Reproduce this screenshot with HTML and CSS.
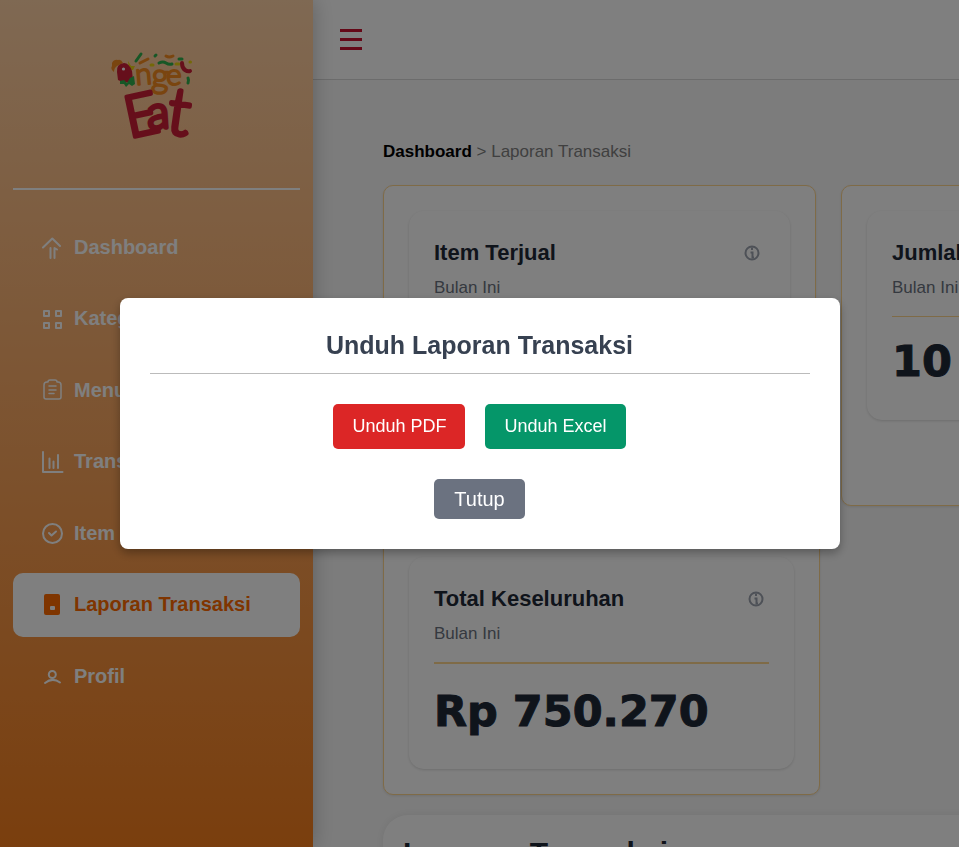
FILE: index.html
```html
<!DOCTYPE html>
<html lang="id">
<head>
<meta charset="utf-8">
<meta name="viewport" content="width=device-width, initial-scale=1">
<title>Laporan Transaksi</title>
<link rel="stylesheet" href="styles.css">
</head>
<body>
<div class="layout">
  <aside class="sidebar">
    <div class="brand">
      <svg class="logo" viewBox="0 0 110 110" role="img" aria-label="Nge Eat">
        <path class="orange" d="M12 23q2-4 6-3q3-1 5 3l-6 3q-3 2-3 6q-4-3-2-6z"/>
        <path class="yellow" d="M28 21l3 5 4 0-2 4-4 0z"/>
        <path class="red" d="M17 32q-1-8 7-9 5 0 8 8l1 9q-6 5-15 0z"/>
        <path class="green" d="M20 41l4-1 3 3 3-5 4-2 1 8-3 2-3-2-3 3-2-3-4 0z"/>
        <circle class="eye" cx="23.5" cy="29" r="1.6"/>
        <g class="confetti">
          <path class="s-green" d="M36 21L41 14M59 23q4-2 7 0t6 1M55 16l1-1M88 38q1 2 0 5M79 19l3 0"/>
          <path class="s-orange" d="M40 23l8-4M66 16q3 2 7 0"/>
          <path class="s-yellow" d="M51 25l2 0M90 22l.5 0M76 24l3 0"/>
          <path class="s-red bold" d="M82 23q0 5 3 7t5 1"/>
        </g>
        <g class="word-top">
          <text x="36" y="45" transform="rotate(-5 36 45)">n</text>
          <text class="g" x="51" y="47" transform="rotate(3 51 47)">g</text>
          <text x="66" y="45">e</text>
        </g>
        <g class="word-bottom">
          <text class="e" x="29" y="98" transform="rotate(-12 29 98)">E</text>
          <text class="a" x="48" y="89" transform="rotate(-4 48 89)">a</text>
          <text class="t" x="65" y="93" transform="rotate(8 65 93)">t</text>
        </g>
      </svg>
    </div>
    <nav class="nav" aria-label="Menu utama">
      <a class="nav-item" href="#"><svg class="icon thick" viewBox="0 0 24 24"><path d="M3 12.500l9.300-9L20 11M10.500 13V23M14.500 23V13L17 14.500"/></svg>Dashboard</a>
      <a class="nav-item" href="#"><svg class="icon thick" viewBox="0 0 24 24"><path d="M4 4h5v5h-5zM16 4h5v5h-5zM4 16h5v5h-5zM16 16h5v5h-5z"/></svg>Kategori</a>
      <a class="nav-item" href="#"><svg class="icon" viewBox="0 0 24 24"><path d="M8 4Q8 2 10 2h5q2 0 2 2h1q3 0 3 3v12q0 2-2 2H6q-2 0-2-2V7q0-3 3-3zM9 8h7M9 12h7M9 15.5h5"/></svg>Menu</a>
      <a class="nav-item" href="#"><svg class="icon thick" viewBox="0 0 24 24"><path d="M3 2V22H22.500M9.500 8.500V18M13.500 11.500V18M18 5V18"/></svg>Transaksi</a>
      <a class="nav-item" href="#"><svg class="icon thick" viewBox="0 0 24 24"><circle cx="12.500" cy="12.500" r="9.500"/><path d="M9 12l2.500 2.500L16 10.500"/></svg>Item Terjual</a>
      <a class="nav-item active" href="#" aria-current="page"><svg class="icon" viewBox="0 0 24 24"><rect class="solid" x="4" y="1" width="16" height="21" rx="2"/><rect class="hole" x="10" y="13" width="5" height="4" rx="1"/></svg>Laporan Transaksi</a>
      <a class="nav-item" href="#"><svg class="icon thick" viewBox="0 0 24 24"><circle cx="12.300" cy="10.500" r="3.500"/><path d="M5 19Q12.500 13 20 18.500"/></svg>Profil</a>
    </nav>
  </aside>

  <div class="page">
    <header class="topbar">
      <button class="menu-toggle" type="button" aria-label="Buka menu">
        <svg viewBox="0 0 22 22"><path d="M0 1.500h22M0 10.500h22M0 19.500h22"/></svg>
      </button>
    </header>
    <main class="content">
      <div class="breadcrumb"><a href="#">Dashboard</a> &gt; Laporan Transaksi</div>
      <div class="stats">
        <section class="frame">
          <div class="stat">
            <div class="stat-head"><h2>Item Terjual</h2><svg class="info" viewBox="0 0 16 16"><circle cx="8" cy="8" r="6.500"/><path d="M8 2.500V5M6.500 7.500H8.500V12.500H10"/></svg></div>
            <p>Bulan Ini</p>
          </div>
        </section>
        <section class="frame">
          <div class="stat">
            <div class="stat-head"><h2>Jumlah Transaksi</h2></div>
            <p>Bulan Ini</p>
            <strong>10</strong>
          </div>
        </section>
      </div>
      <div class="stats">
        <section class="frame wide">
          <div class="stat">
            <div class="stat-head"><h2>Total Keseluruhan</h2><svg class="info" viewBox="0 0 16 16"><circle cx="8" cy="8" r="6.500"/><path d="M8 2.500V5M6.500 7.500H8.500V12.500H10"/></svg></div>
            <p>Bulan Ini</p>
            <strong>Rp 750.270</strong>
          </div>
        </section>
      </div>
      <section class="report"><h2>Laporan Transaksi</h2></section>
    </main>
  </div>
</div>

<div class="overlay">
  <div class="modal" role="dialog" aria-modal="true" aria-labelledby="modal-title">
    <h2 id="modal-title">Unduh Laporan Transaksi</h2>
    <div class="actions">
      <button class="btn pdf" type="button">Unduh PDF</button>
      <button class="btn excel" type="button">Unduh Excel</button>
    </div>
    <button class="btn close" type="button">Tutup</button>
  </div>
</div>
</body>
</html>
```

FILE: styles.css
```css
* { box-sizing: border-box; }

body {
  margin: 0;
  height: 100vh;
  overflow: hidden;
  background: #f9f9f9;
  color: #1f2937;
  font-family: "Liberation Sans", Arial, sans-serif;
}

h2, p { margin: 0; }
button { font-family: inherit; border: 0; cursor: pointer; }

.layout { display: flex; height: 100vh; overflow: hidden; }

/* Sidebar */
.sidebar {
  flex: 0 0 313px;
  z-index: 1;
  padding: 0 13px;
  background: linear-gradient(#ffd2a6, #f47d1c);
  box-shadow: 0 0 20px rgba(0, 0, 0, 0.25);
}

.brand {
  display: flex;
  justify-content: center;
  padding: 40px 0 38px;
  border-bottom: 2px solid #fff;
}

.logo { width: 110px; height: 110px; margin-right: 3px; overflow: visible; }
.logo text {
  font-family: Lato, "Open Sans", sans-serif;
  font-weight: 300;
  stroke-linejoin: round;
  stroke-linecap: round;
}
.word-top text { font-size: 30px; fill: #f58a1f; stroke: #f58a1f; stroke-width: 2; }
.word-top .g { font-size: 34px; }
.word-bottom text { fill: #cc1f36; stroke: #cc1f36; stroke-width: 4; }
.word-bottom .e { font-size: 58px; }
.word-bottom .a { font-size: 46px; }
.word-bottom .t { font-size: 66px; }
.orange { fill: #f58a1f; }
.yellow { fill: #e8d010; }
.red { fill: #cc1f36; }
.green { fill: #2fae4c; }
.eye { fill: #fff; }
.confetti path { fill: none; stroke-width: 3; stroke-linecap: round; }
.confetti .bold { stroke-width: 4; }
.s-green { stroke: #2fae4c; }
.s-orange { stroke: #f58a1f; }
.s-yellow { stroke: #e8d010; }
.s-red { stroke: #cc1f36; }

.nav {
  display: flex;
  flex-direction: column;
  justify-content: space-between;
  height: 493px;
  margin-top: 25px;
}

.nav-item {
  display: flex;
  align-items: center;
  gap: 10px;
  height: 64px;
  padding: 0 27px;
  border-radius: 10px;
  color: #fff;
  font-size: 20px;
  font-weight: 700;
  text-decoration: none;
}

.nav-item.active { background: #fff; color: #ff6a00; }

.icon {
  width: 24px;
  height: 24px;
  fill: none;
  stroke: currentColor;
  stroke-width: 1.5;
  stroke-linecap: round;
  stroke-linejoin: round;
}

.icon.thick { stroke-width: 2; }
.solid { fill: currentColor; stroke: none; }
.hole { fill: #fff; stroke: none; }

/* Top bar */
.page { flex: 1; min-width: 0; }

.topbar {
  display: flex;
  align-items: center;
  height: 80px;
  padding: 0 27px;
  background: #fff;
  border-bottom: 1px solid #d8d8d8;
}

.menu-toggle { display: flex; padding: 0; background: none; }
.menu-toggle svg { width: 22px; height: 22px; stroke: #c8102e; stroke-width: 3; }

/* Content */
.content { min-width: max-content; padding: 60px 70px; }

.breadcrumb {
  margin-bottom: 21px;
  color: #808080;
  font-size: 17px;
  line-height: 24px;
}

.breadcrumb a { color: #000; font-weight: 700; text-decoration: none; }

.stats { display: flex; gap: 25px; margin-bottom: 25px; }

.frame {
  flex: none;
  width: 433px;
  min-height: 321px;
  padding: 25px;
  background: #fff;
  border: 1px solid #ffd68f;
  border-radius: 10px;
  box-shadow: 0 1px 3px rgba(0, 0, 0, 0.1);
}

.stat {
  padding: 25px;
  border-radius: 15px;
  box-shadow: 0 1px 3px rgba(0, 0, 0, 0.15);
}

.stat-head {
  display: flex;
  align-items: center;
  justify-content: space-between;
  padding-right: 5px;
}

.stat h2 { font-size: 22px; line-height: 34px; white-space: nowrap; }

.info {
  width: 16px;
  height: 16px;
  fill: none;
  stroke: #9ca3af;
  stroke-width: 2;
}

.stat p {
  padding: 5px 0 16px;
  border-bottom: 1px solid #ffd68f;
  color: #6b7280;
  font-size: 17px;
  line-height: 25px;
}

.stat strong {
  display: block;
  margin: 12px 0 2px;
  font-family: "DejaVu Sans", Inter, sans-serif;
  font-size: 43px;
  font-weight: 700;
  line-height: 64px;
  -webkit-text-stroke: 1px currentColor;
}

.frame.wide { width: 437px; min-height: 0; }
.frame.wide p { border-bottom-width: 2px; }
.frame.wide strong { margin: 15px 0 1px; }

.report {
  height: 400px;
  margin-top: -5px;
  padding: 20px;
  background: #fff;
  border-radius: 25px;
  box-shadow: 0 0 10px rgba(0, 0, 0, 0.08);
}

.report h2 { font-size: 30px; line-height: 36px; }

/* Modal */
.overlay {
  position: fixed;
  inset: 0;
  z-index: 10;
  display: flex;
  align-items: center;
  justify-content: center;
  background: rgba(0, 0, 0, 0.5);
}

.modal {
  display: flex;
  flex-direction: column;
  align-items: center;
  gap: 30px;
  width: 90%;
  max-width: 720px;
  padding: 30px;
  background: #fff;
  border-radius: 8px;
  box-shadow: 0 4px 10px rgba(0, 0, 0, 0.3);
}

.modal h2 {
  width: 100%;
  padding-bottom: 10px;
  border-bottom: 1px solid #bbb;
  color: #374151;
  font-size: 25px;
  line-height: 35px;
  text-align: center;
}

.actions { display: flex; gap: 20px; }

.btn {
  height: 45px;
  padding: 0 19px;
  border-radius: 5px;
  color: #fff;
  font-size: 18px;
}

.pdf { background: #dc2626; }
.excel { background: #059669; }
.close { height: 40px; padding: 0 20px; background: #6b7280; font-size: 20px; }
```
